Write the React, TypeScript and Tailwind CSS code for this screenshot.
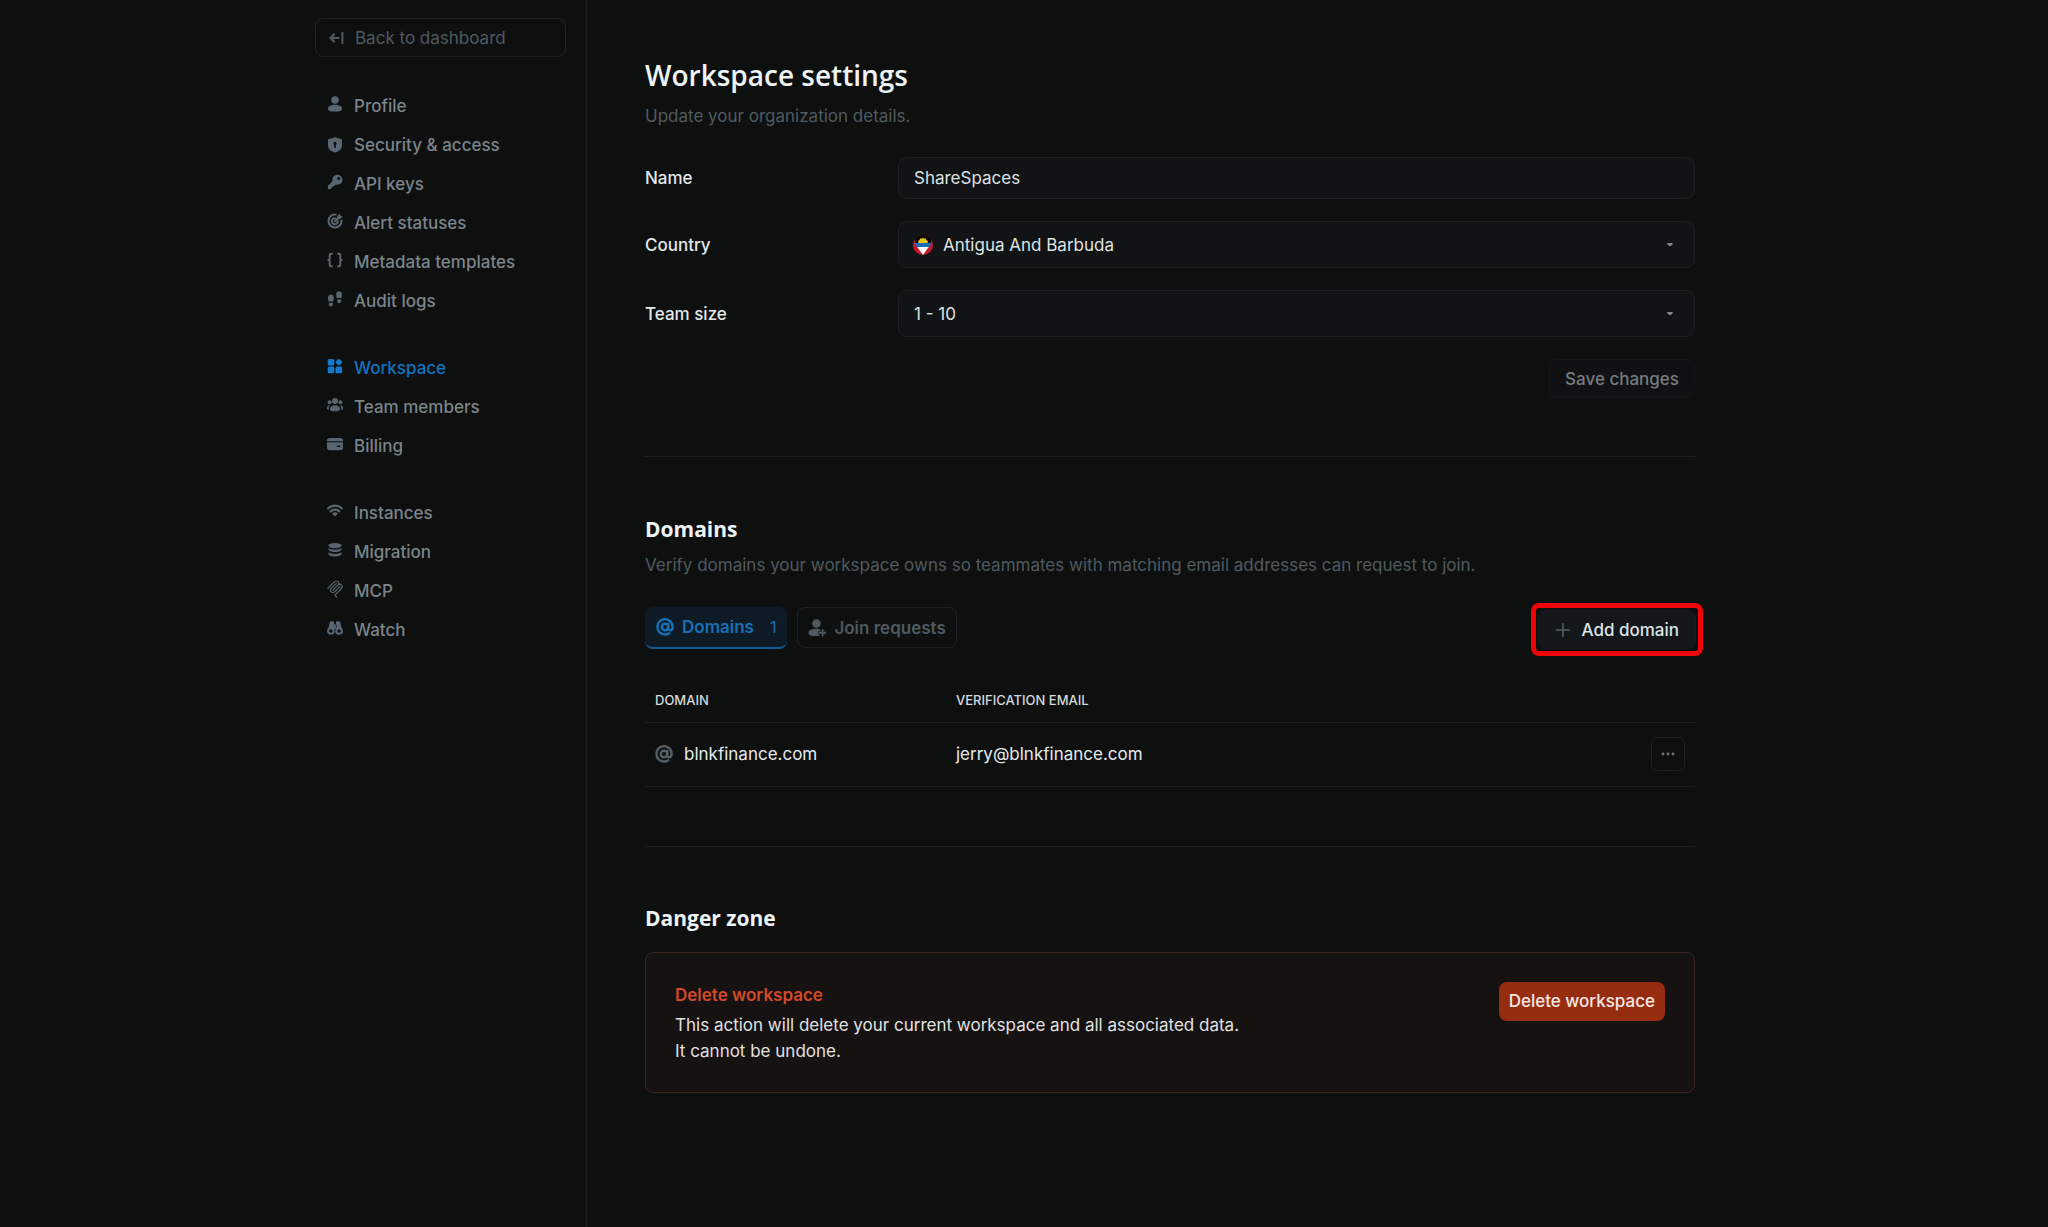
import React, { type ReactNode } from "react";

function Icon({ children, size = "size-4" }: { children: ReactNode; size?: string }) {
  return (
    <svg viewBox="0 0 16 16" fill="currentColor" aria-hidden="true" className={`${size} shrink-0 overflow-visible`}>
      {children}
    </svg>
  );
}

const stroke = {
  fill: "none",
  stroke: "currentColor",
  strokeLinecap: "round" as const,
  strokeLinejoin: "round" as const,
};

const BackIcon = () => (
  <Icon>
    <path {...stroke} strokeWidth="2.100" d="M6 4.400 2.400 8 6 11.600M3 8h7.600M14.400 2.800v10.400" />
  </Icon>
);
const UserIcon = () => (
  <Icon>
    <circle cx="8" cy="4" r="3.800" />
    <path d="M8 8.800c4.200 0 7 1.700 7 3.800 0 2-1.600 3-3.400 3H4.400C2.600 15.600 1 14.600 1 12.600c0-2.100 2.800-3.800 7-3.800z" />
  </Icon>
);
const ShieldIcon = () => (
  <Icon>
    <path
      transform="translate(0 1.500)"
      fillRule="evenodd"
      d="M8 .4c2 1.100 4.300 1.800 6.200 2 .5.100.8.500.8 1V9c0 3.400-3 6.100-7 7-4-.9-7-3.600-7-7V3.400c0-.5.300-.9.800-1C3.700 2.200 6 1.500 8 .4zM8 5.200a1.700 1.700 0 0 0-.9 3.100v2.300a.9.900 0 0 0 1.800 0V8.300A1.700 1.700 0 0 0 8 5.200z"
    />
  </Icon>
);
const KeyIcon = () => (
  <Icon>
    <path
      fillRule="evenodd"
      d="M10.300.8a5 5 0 1 1-1.500 9.700L7.400 12H5.800v1.600H4.200v1.100c0 .3-.2.500-.5.500H1.500a.6.600 0 0 1-.6-.6v-2.300c0-.3.100-.5.300-.7l4.300-4.400A5 5 0 0 1 10.300.8zm1.400 2.200a1.500 1.500 0 1 0 0 3 1.500 1.500 0 0 0 0-3z"
    />
  </Icon>
);
const TargetIcon = () => (
  <Icon>
    <path {...stroke} strokeWidth="2.100" d="M8.600 1.500A6.500 6.500 0 1 0 14.500 7.600M7.900 5.200a3 3 0 1 0 3 3M8 8.200l3.300-3.300" />
    <path d="M10 3.300 12.600.4l.8 2.300 2.300.7-2.800 2.700-2.900.1z" />
  </Icon>
);
const BracesIcon = () => (
  <Icon>
    <path
      {...stroke}
      strokeWidth="2"
      d="M5 1.800h-.6C3.200 1.800 2.700 2.500 2.700 3.600v2.600C2.700 7.300 2 8 1.300 8c.7 0 1.400.7 1.400 1.800v2.600c0 1.100.5 1.800 1.700 1.800H5M11 1.800h.6c1.200 0 1.700.7 1.700 1.800v2.600c0 1.100.7 1.800 1.400 1.800-.7 0-1.400.7-1.400 1.800v2.600c0 1.100-.5 1.800-1.700 1.800H11"
    />
  </Icon>
);
const FootprintsIcon = () => (
  <Icon>
    <path d="M4 3.600c1.900 0 2.900 1.700 2.900 3.500 0 1.200-.3 2.300-.6 3.400H1.700C1.300 9.400.9 8.400.9 7.100.900 5.200 2.200 3.600 4 3.600zM1.800 11.800h4.100v1.700a2 2 0 0 1-4.100 0zM12 .2C10.100.2 9.100 1.900 9.100 3.700c0 1.200.3 2.300.6 3.400h4.600c.4-1.100.8-2.100.8-3.400C15.100 1.800 13.800.2 12 .2zM14.200 8.400h-4.100v1.700a2 2 0 0 0 4.100 0z" />
  </Icon>
);
const WorkspaceIcon = () => (
  <Icon>
    <rect x=".7" y=".9" width="6.600" height="6.600" rx="1.500" />
    <rect x=".7" y="8.600" width="6.600" height="6.600" rx="1.500" />
    <rect x="8.500" y="8.600" width="6.600" height="6.600" rx="1.500" />
    <rect x="9.200" y="1.500" width="5.400" height="5.400" rx="1.400" transform="rotate(45 11.900 4.200)" />
  </Icon>
);
const TeamIcon = () => (
  <Icon>
    <circle cx="8" cy="4" r="3" />
    <circle cx="2.600" cy="5.300" r="2" />
    <circle cx="13.400" cy="5.300" r="2" />
    <path d="M8 8.200c3 0 5 1.600 5 3.600 0 1.400-1 2.400-2.300 2.400H5.300C4 14.200 3 13.200 3 11.800c0-2 2-3.600 5-3.600zM3 8.300C1.200 8.500-.2 9.700-.2 11.200c0 .9.900 1.600 2.100 1.600-.4-1.700 0-3.300 1.100-4.500zM13 8.300c1.800.2 3.200 1.400 3.200 2.900 0 .9-.9 1.600-2.100 1.600.4-1.700 0-3.300-1.100-4.500z" />
  </Icon>
);
const CardIcon = () => (
  <Icon>
    <path d="M2.500 2h11C15 2 16 3 16 4.400v.8H0v-.8C0 3 1 2 2.500 2z" />
    <path
      fillRule="evenodd"
      d="M0 6.300h16v5.500c0 1.400-1 2.400-2.500 2.400h-11C1 14.200 0 13.200 0 11.800zM10.500 9.600a.7.700 0 0 0 0 1.500h2.200a.7.700 0 0 0 0-1.500z"
    />
  </Icon>
);
const WifiIcon = () => (
  <Icon>
    <path {...stroke} strokeWidth="2.200" d="M1.200 5.400a9.800 9.800 0 0 1 13.600 0M3.700 8.400a6.300 6.300 0 0 1 8.600 0" />
    <path d="M8 9.200c1.100 0 2.100.4 2.900 1.100L8.700 13a.9.900 0 0 1-1.400 0l-2.200-2.700A4.400 4.400 0 0 1 8 9.200z" />
  </Icon>
);
const DatabaseIcon = () => (
  <Icon>
    <ellipse cx="8" cy="3.600" rx="6.600" ry="2.600" />
    <path d="M1.400 6c1.500 1.200 4 1.700 6.600 1.700s5.100-.5 6.600-1.700v1.300c0 1.500-3 2.700-6.600 2.700S1.400 8.800 1.400 7.300z" />
    <path d="M1.400 10.200c1.500 1.200 4 1.700 6.600 1.700s5.100-.5 6.600-1.700v1.500c0 1.500-3 2.700-6.600 2.700s-6.600-1.200-6.600-2.700z" />
  </Icon>
);
const McpIcon = () => (
  <svg viewBox="0 0 180 180" aria-hidden="true" className="size-[18px] shrink-0">
    <path
      {...stroke}
      strokeWidth="12"
      d="M18 84.850 85.880 16.970c9.370-9.370 24.570-9.370 33.940 0 9.370 9.370 9.370 24.570 0 33.940L68.560 102.180M69.270 101.470l50.550-50.560c9.370-9.370 24.570-9.370 33.940 0l.36.360c9.370 9.370 9.370 24.570 0 33.940l-61.390 61.390c-3.130 3.130-3.130 8.190 0 11.310l12.610 12.610M102.850 33.940 52.650 84.150c-9.370 9.370-9.370 24.570 0 33.940 9.370 9.370 24.570 9.370 33.940 0l50.200-50.210"
    />
  </svg>
);
const BinocularsIcon = () => (
  <Icon>
    <path d="M4 1.200h1.600C6.500 1.200 7.100 1.700 7.100 2.600V9H1.300L2.600 2.700c.2-.9.600-1.500 1.400-1.500zM12 1.200h-1.600c-.9 0-1.500.5-1.500 1.400V9h5.800l-1.300-6.300c-.2-.9-.6-1.500-1.400-1.500zM6.500 4.500h3v4.500h-3z" />
    <circle cx="3.900" cy="11" r="2.800" {...stroke} strokeWidth="2.100" />
    <circle cx="12.100" cy="11" r="2.800" {...stroke} strokeWidth="2.100" />
  </Icon>
);
const AtIcon = () => (
  <Icon size="size-[18px]">
    <circle cx="8" cy="8" r="2.900" {...stroke} strokeWidth="2.100" />
    <path {...stroke} strokeWidth="2.100" d="M10.900 5.200V9c0 1.300.7 1.900 1.700 1.900 1.300 0 2.200-1 2.200-2.900A6.800 6.800 0 1 0 11.800 13.500" />
  </Icon>
);
const UserPlusIcon = () => (
  <Icon size="size-[18px]">
    <circle cx="7.500" cy="4" r="3.800" />
    <path d="M7.500 8.700c1.400 0 2.700.3 3.700.8v1.200H9.400v3.200h1.200c-.4.700-1.100 1.100-2 1.100H3.800c-1.900 0-3.300-1-3.300-2.900 0-2 2.700-3.400 7-3.400z" />
    <path {...stroke} strokeWidth="1.600" d="M13 9.700v5M10.500 12.200h5" />
  </Icon>
);
const FlagIcon = () => (
  <svg viewBox="0 0 20 20" aria-hidden="true" className="size-5">
    <clipPath id="flag-clip">
      <circle cx="10" cy="10" r="10" />
    </clipPath>
    <g clipPath="url(#flag-clip)">
      <path fill="#c9182b" d="M0 0h20v20H0z" />
      <path fill="#050505" d="M0 0h20L17.500 8h-15z" />
      <path fill="#e8c422" d="m10 2.500 1.200 1.300 1.900-.5.200 1.800 1.700.8-.5 2.300h-9L5 5.900l1.700-.8.200-1.800 1.900.5z" />
      <path fill="#1c6cb8" d="M1 8h18l-3.300 4.500H4.300z" />
      <path fill="#fff" d="M4.300 12h11.400L10 20z" />
    </g>
  </svg>
);
const Caret = () => (
  <svg viewBox="0 0 8 5" aria-hidden="true" className="pointer-events-none absolute right-5.5 w-1.5 text-[#7c8589]">
    <path fill="currentColor" d="M1 0h6c.8 0 1.200.9.600 1.500L4.700 4.600a1 1 0 0 1-1.400 0L.4 1.500C-.2.900.2 0 1 0z" />
  </svg>
);

const groups = [
  [
    { label: "Profile", icon: <UserIcon /> },
    { label: "Security & access", icon: <ShieldIcon /> },
    { label: "API keys", icon: <KeyIcon /> },
    { label: "Alert statuses", icon: <TargetIcon /> },
    { label: "Metadata templates", icon: <BracesIcon /> },
    { label: "Audit logs", icon: <FootprintsIcon /> },
  ],
  [
    { label: "Workspace", icon: <WorkspaceIcon />, active: true },
    { label: "Team members", icon: <TeamIcon /> },
    { label: "Billing", icon: <CardIcon /> },
  ],
  [
    { label: "Instances", icon: <WifiIcon /> },
    { label: "Migration", icon: <DatabaseIcon /> },
    { label: "MCP", icon: <McpIcon /> },
    { label: "Watch", icon: <BinocularsIcon /> },
  ],
];

function Sidebar() {
  return (
    <aside className="w-[292px] shrink-0 border-r border-[#1a1e1e] px-5 pt-[18px]">
      <a
        href="#dashboard"
        className="flex h-[39px] items-center gap-[11px] rounded-lg border border-[#1e2323] px-3 text-[#4e5a61]"
      >
        <BackIcon />
        Back to dashboard
      </a>
      <nav aria-label="Settings" className="mt-[29px] flex flex-col gap-7">
        {groups.map((items) => (
          <ul key={items[0].label}>
            {items.map((item) => (
              <li key={item.label}>
                <a
                  href={`#${item.label}`}
                  aria-current={"active" in item ? "page" : undefined}
                  className={`flex h-[39px] items-center gap-2.5 pl-[11px] font-medium ${
                    "active" in item ? "text-[#1272c0]" : "text-[#7b8489]"
                  }`}
                >
                  <span
                    className={`mb-1 flex w-[18px] items-center justify-center ${
                      "active" in item ? "text-[#1478cc]" : "text-[#576670]"
                    }`}
                  >
                    {item.icon}
                  </span>
                  {item.label}
                </a>
              </li>
            ))}
          </ul>
        ))}
      </nav>
    </aside>
  );
}

function Field({ id, label, children }: { id: string; label: string; children: ReactNode }) {
  return (
    <div className="grid grid-cols-[253px_1fr] items-center">
      <label htmlFor={id} className="font-medium text-[#e3e8ea]">
        {label}
      </label>
      {children}
    </div>
  );
}

const control = "w-full rounded-lg border border-[#1c2021] bg-[#111314] text-[#dfe3e5] outline-none";
const heading = "font-['Open_Sans',sans-serif] text-[#eef3f5]";

export default function App() {
  return (
    <div className="min-h-screen bg-[#0d100f] font-['Inter',sans-serif] text-[17px] leading-[26px]">
      <div className="mx-auto flex min-h-screen max-w-[1458px]">
        <Sidebar />
        <main className="min-w-0 flex-1 px-[58px] pt-[55px] pb-20">
          <section>
            <h1 className={`${heading} text-[28px] leading-10 font-semibold`}>Workspace settings</h1>
            <p className="mt-2 text-[#505a5f]">Update your organization details.</p>
            <form className="mt-7 flex flex-col gap-[22px]" onSubmit={(e) => e.preventDefault()}>
              <Field id="name" label="Name">
                <input id="name" defaultValue="ShareSpaces" className={`${control} h-[42px] px-[15px]`} />
              </Field>
              <Field id="country" label="Country">
                <div className="relative flex items-center">
                  <span className="pointer-events-none absolute left-[15px]">
                    <FlagIcon />
                  </span>
                  <select id="country" className={`${control} h-[47px] appearance-none pl-11`}>
                    <option>Antigua And Barbuda</option>
                  </select>
                  <Caret />
                </div>
              </Field>
              <Field id="team-size" label="Team size">
                <div className="relative flex items-center">
                  <select id="team-size" className={`${control} h-[47px] appearance-none px-[15px]`}>
                    <option>1 - 10</option>
                  </select>
                  <Caret />
                </div>
              </Field>
              <button
                type="submit"
                className="h-[39px] self-end rounded-lg border border-[#15181a] bg-[#0f1113] px-[15px] font-medium text-[#767b7e]"
              >
                Save changes
              </button>
            </form>
          </section>

          <hr className="mt-[58px] border-[#1e2222]" />

          <section className="mt-14">
            <h2 className={`${heading} text-[21px] leading-8 font-bold`}>Domains</h2>
            <p className="mt-[7px] text-[#505a5f]">
              Verify domains your workspace owns so teammates with matching email addresses can request to join.
            </p>
            <div className="mt-[29px] flex items-start justify-between">
              <div role="tablist" className="flex items-start gap-2.5">
                <button
                  role="tab"
                  aria-selected="true"
                  className="flex h-[42px] items-center rounded-lg border-b-2 border-[#145a93] bg-[#0e1a24] px-[11px] font-semibold text-[#1670b8]"
                >
                  <AtIcon />
                  <span className="ml-2">Domains</span>
                  <span className="ml-4 text-base font-normal">1</span>
                </button>
                <button
                  role="tab"
                  aria-selected="false"
                  className="flex h-[41px] items-center gap-2 rounded-lg border border-[#1d2122] px-2.5 font-semibold text-[#4f5a60]"
                >
                  <UserPlusIcon />
                  Join requests
                </button>
              </div>
              <div className="-mt-1 -mr-2 rounded-lg border-5 border-[#f00408] p-0.5">
                <button className="flex h-[39px] items-center gap-2.5 rounded-lg border border-[#171b1e] bg-[#131719] px-4 font-medium text-[#dde5e8]">
                  <svg viewBox="0 0 16 16" aria-hidden="true" className="size-4 text-[#52626b]">
                    <path {...stroke} strokeWidth="1.600" d="M8 1.500v13M1.500 8h13" />
                  </svg>
                  Add domain
                </button>
              </div>
            </div>
            <table className="mt-[22px] w-full table-fixed text-left">
              <thead>
                <tr className="h-11 border-b border-[#1d2121] text-[13px] text-[#d5dadc]">
                  <th scope="col" className="w-[301px] pl-2.5 font-medium">DOMAIN</th>
                  <th scope="col" className="pl-2.5 font-medium">VERIFICATION EMAIL</th>
                  <th scope="col" className="w-20" aria-label="Actions" />
                </tr>
              </thead>
              <tbody>
                <tr className="h-16 border-b border-[#1a1e1e] text-[#e6eaec]">
                  <td className="pl-2.5">
                    <span className="flex items-center gap-[11px]">
                      <span className="text-[#566167]">
                        <AtIcon />
                      </span>
                      blnkfinance.com
                    </span>
                  </td>
                  <td className="pl-2.5">jerry@blnkfinance.com</td>
                  <td className="pr-2.5">
                    <button
                      aria-label="More actions"
                      className="ml-auto flex size-[34px] items-center justify-center rounded-md border border-[#1e2223] text-[#6a7478]"
                    >
                      <Icon>
                        <circle cx="3" cy="8" r="1.400" />
                        <circle cx="8" cy="8" r="1.400" />
                        <circle cx="13" cy="8" r="1.400" />
                      </Icon>
                    </button>
                  </td>
                </tr>
              </tbody>
            </table>
          </section>

          <hr className="mt-[59px] border-[#1a1e1e]" />

          <section className="mt-[55px]">
            <h2 className={`${heading} text-[21px] leading-8 font-bold`}>Danger zone</h2>
            <div className="mt-[18px] flex items-start justify-between rounded-lg border border-[#3d231e] bg-[#161211] px-[29px] pt-[29px] pb-7">
              <div>
                <h3 className="font-semibold text-[#d2492a]">Delete workspace</h3>
                <p className="mt-1 text-[#e0e1e1]">
                  This action will delete your current workspace and all associated data.
                  <br />
                  It cannot be undone.
                </p>
              </div>
              <button className="h-[39px] shrink-0 rounded-lg bg-[#962d11] px-2.5 font-medium text-[#f6e7e2]">
                Delete workspace
              </button>
            </div>
          </section>
        </main>
      </div>
    </div>
  );
}
